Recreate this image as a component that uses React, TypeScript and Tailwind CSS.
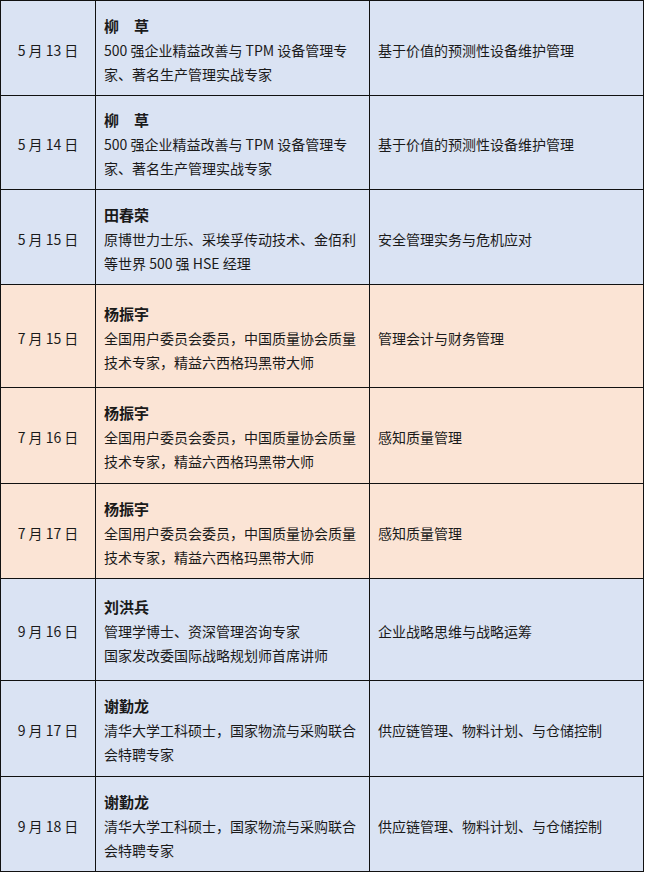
const BLUE = "bg-[#dae3f3]";
const PEACH = "bg-[#fbe4d5]";

type Row = {
  date: string;
  name: string;
  bio: string[];
  topic: string;
  h: string;
  bg: string;
};

const rows: Row[] = [
  {
    date: "5 月 13 日",
    name: "柳　草",
    bio: ["500 强企业精益改善与 TPM 设备管理专", "家、著名生产管理实战专家"],
    topic: "基于价值的预测性设备维护管理",
    h: "h-[95px]",
    bg: BLUE,
  },
  {
    date: "5 月 14 日",
    name: "柳　草",
    bio: ["500 强企业精益改善与 TPM 设备管理专", "家、著名生产管理实战专家"],
    topic: "基于价值的预测性设备维护管理",
    h: "h-[94px]",
    bg: BLUE,
  },
  {
    date: "5 月 15 日",
    name: "田春荣",
    bio: ["原博世力士乐、采埃孚传动技术、金佰利", "等世界 500 强 HSE 经理"],
    topic: "安全管理实务与危机应对",
    h: "h-[95px]",
    bg: BLUE,
  },
  {
    date: "7 月 15 日",
    name: "杨振宇",
    bio: ["全国用户委员会委员，中国质量协会质量", "技术专家，精益六西格玛黑带大师"],
    topic: "管理会计与财务管理",
    h: "h-[103px]",
    bg: PEACH,
  },
  {
    date: "7 月 16 日",
    name: "杨振宇",
    bio: ["全国用户委员会委员，中国质量协会质量", "技术专家，精益六西格玛黑带大师"],
    topic: "感知质量管理",
    h: "h-[96px]",
    bg: PEACH,
  },
  {
    date: "7 月 17 日",
    name: "杨振宇",
    bio: ["全国用户委员会委员，中国质量协会质量", "技术专家，精益六西格玛黑带大师"],
    topic: "感知质量管理",
    h: "h-[95px]",
    bg: PEACH,
  },
  {
    date: "9 月 16 日",
    name: "刘洪兵",
    bio: ["管理学博士、资深管理咨询专家", "国家发改委国际战略规划师首席讲师"],
    topic: "企业战略思维与战略运筹",
    h: "h-[102px]",
    bg: BLUE,
  },
  {
    date: "9 月 17 日",
    name: "谢勤龙",
    bio: ["清华大学工科硕士，国家物流与采购联合", "会特聘专家"],
    topic: "供应链管理、物料计划、与仓储控制",
    h: "h-[96px]",
    bg: BLUE,
  },
  {
    date: "9 月 18 日",
    name: "谢勤龙",
    bio: ["清华大学工科硕士，国家物流与采购联合", "会特聘专家"],
    topic: "供应链管理、物料计划、与仓储控制",
    h: "h-[95px]",
    bg: BLUE,
  },
];

export default function App() {
  return (
    <div
      className="w-[645px] h-[874px] bg-white text-[14px] leading-[24px] text-[#1a1a1a]"
      style={{ fontFamily: '"Noto Sans CJK SC", "Noto Sans", sans-serif' }}
    >
      <div className="w-[644px] border-l border-t border-[#111]">
        {rows.map((r, i) => (
          <div key={i} className={`flex border-b border-[#111] ${r.h} ${r.bg}`}>
            <div className="w-[95px] shrink-0 border-r border-[#111] flex items-center justify-center pt-[3px]">
              {r.date}
            </div>
            <div className="w-[274px] shrink-0 border-r border-[#111] flex flex-col justify-center pl-[8px] pt-[3px]">
              <div className="font-bold text-[15px]">{r.name}</div>
              {r.bio.map((b, j) => (
                <div key={j} className="whitespace-nowrap">{b}</div>
              ))}
            </div>
            <div className="flex-1 border-r border-[#111] flex items-center pl-[8px] pt-[3px]">
              {r.topic}
            </div>
          </div>
        ))}
      </div>
    </div>
  );
}
